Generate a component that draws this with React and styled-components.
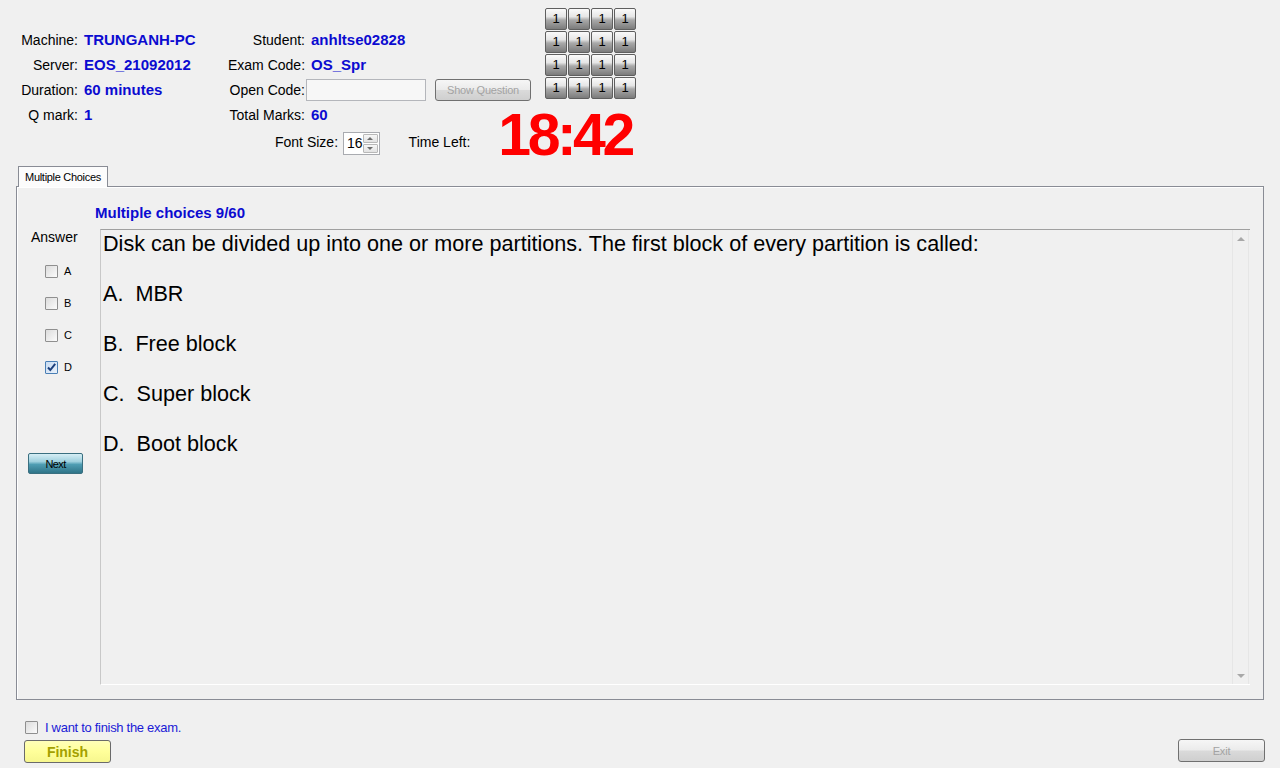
import React from "react";
import styled, { createGlobalStyle } from "styled-components";

const GlobalStyle = createGlobalStyle`
  html, body { margin: 0; padding: 0; background: #f0f0f0; }
  body { font-family: "Liberation Sans", Arial, sans-serif; color: #000; }
  #root { width: 1280px; height: 768px; overflow: hidden; }
`;

const Page = styled.div`
  width: 1280px;
  height: 768px;
  display: flex;
  flex-direction: column;
`;

const Header = styled.div`
  height: 166px;
  display: flex;
  align-items: flex-start;
`;

const InfoColumn = styled.div`
  width: 545px;
  flex-shrink: 0;
`;

const InfoGrid = styled.div`
  padding-top: 27px;
  display: grid;
  grid-template-columns: 78px 150px 77px 1fr;
  grid-auto-rows: 25px;
  align-items: center;
`;

const Label = styled.div`
  text-align: right;
  font-size: 14px;
  line-height: 16px;
  white-space: nowrap;
`;

const Value = styled.div`
  padding-left: 6px;
  font-size: 15px;
  font-weight: bold;
  color: #0b0bd0;
  line-height: 16px;
  white-space: nowrap;
`;

const OpenCodeRow = styled.div`
  display: flex;
  align-items: center;
`;

const TextInput = styled.div`
  box-sizing: border-box;
  margin-left: 1px;
  width: 120px;
  height: 22px;
  background: #f7f7f7;
  border: 1px solid #b4b6bb;
`;

const GrayButton = styled.button`
  box-sizing: border-box;
  width: ${(p) => p.w || 87}px;
  height: ${(p) => p.h || 23}px;
  margin: 0 0 0 ${(p) => p.ml || 0}px;
  padding: 0;
  border: 1px solid #707070;
  border-radius: 3px;
  background: linear-gradient(to bottom, #f6f6f6 0%, #ebebeb 48%, #dadada 52%, #cfcfcf 100%);
  font-family: "Liberation Sans", Arial, sans-serif;
  font-size: 11px;
  letter-spacing: -0.2px;
  color: #a3a3a3;
`;

const ButtonGrid = styled.div`
  margin-top: 8px;
  display: grid;
  grid-template-columns: repeat(4, 22px);
  grid-auto-rows: 22px;
  gap: 1px;
`;

const NumButton = styled.button`
  box-sizing: border-box;
  margin: 0;
  padding: 0;
  width: 22px;
  height: 22px;
  border: 1px solid #5f5f5f;
  border-radius: 2px;
  background: linear-gradient(to bottom, #fafafa 0%, #e6e6e6 38%, #a9a9a9 55%, #7b7b7b 100%);
  font-family: "Liberation Sans", Arial, sans-serif;
  font-size: 13px;
  line-height: 20px;
  color: #000;
`;

const BottomRow = styled.div`
  margin-top: -17px;
  height: 56px;
  padding-left: 275px;
  display: flex;
  align-items: flex-start;
  white-space: nowrap;
`;

const RowLabel = styled.div`
  margin-top: 24px;
  margin-left: ${(p) => p.ml || 0}px;
  font-size: 14px;
  line-height: 16px;
`;

const Spinner = styled.div`
  box-sizing: border-box;
  margin-left: 5px;
  margin-top: 22px;
  width: 42px;
  height: 23px;
  display: flex;
  background: #fff;
  border: 1px solid #a9abb0;
`;

const SpinValue = styled.div`
  flex: 1;
  padding-left: 3px;
  font-size: 14px;
  line-height: 21px;
`;

const SpinButtons = styled.div`
  width: 15px;
  display: flex;
  flex-direction: column;
  padding: 1px 1px 1px 0;
  gap: 1px;
`;

const SpinBtn = styled.div`
  flex: 1;
  display: flex;
  align-items: center;
  justify-content: center;
  border: 1px solid #b8b8b8;
  border-radius: 1px;
  background: linear-gradient(to bottom, #f7f7f7, #e2e2e2);
  &::after {
    content: "";
    border-left: 3px solid transparent;
    border-right: 3px solid transparent;
    ${(p) => (p.up ? "border-bottom: 3px solid #6d6d6d;" : "border-top: 3px solid #6d6d6d;")}
  }
`;

const Clock = styled.div`
  margin-left: 28px;
  font-size: 59px;
  font-weight: bold;
  line-height: 50px;
  letter-spacing: -3.5px;
  color: #ff0000;
`;

const TabStrip = styled.div`
  height: 20px;
  padding-left: 18px;
  display: flex;
  align-items: flex-end;
  position: relative;
  z-index: 1;
`;

const Tab = styled.div`
  box-sizing: border-box;
  width: 90px;
  height: 21px;
  margin-bottom: -1px;
  border: 1px solid #898c95;
  border-bottom: none;
  background: #fcfcfc;
  font-size: 11px;
  letter-spacing: -0.3px;
  line-height: 20px;
  text-align: center;
`;

const TabPanel = styled.div`
  box-sizing: border-box;
  margin-left: 16px;
  width: 1248px;
  height: 514px;
  border: 1px solid #898c95;
  box-shadow: inset 1px 1px 0 #fff;
  display: grid;
  grid-template-columns: 83px 1150px;
  grid-template-rows: 42px 456px;
`;

const Title = styled.div`
  grid-column: 2;
  align-self: end;
  margin: 0 0 7px -5px;
  font-size: 15px;
  font-weight: bold;
  line-height: 18px;
  color: #0b0bd0;
`;

const AnswerColumn = styled.div`
  grid-column: 1;
  display: flex;
  flex-direction: column;
  align-items: flex-start;
`;

const AnswerTitle = styled.div`
  margin: 0 0 10px 14px;
  font-size: 14px;
  line-height: 16px;
`;

const OptionRow = styled.div`
  height: 32px;
  margin-left: 28px;
  display: flex;
  align-items: center;
  gap: 6px;
  font-size: 11px;
`;

const Box = styled.span`
  box-sizing: border-box;
  width: 13px;
  height: 13px;
  display: inline-flex;
  align-items: center;
  justify-content: center;
  border: 1px solid ${(p) => (p.checked ? "#4a7fb5" : "#8f8f8f")};
  border-radius: 1px;
  background: ${(p) =>
    p.checked
      ? "linear-gradient(135deg, #c9dcf2, #e9f1fa)"
      : "linear-gradient(135deg, #dcdcdc, #fbfbfb)"};
`;

const NextButton = styled.button`
  box-sizing: border-box;
  margin: 70px 0 0 11px;
  padding: 0;
  width: 55px;
  height: 21px;
  border: 1px solid #3a6f80;
  border-radius: 2px;
  background: linear-gradient(to bottom, #d6eef5 0%, #9fd0de 40%, #4f9db3 55%, #2f7488 100%);
  font-family: "Liberation Sans", Arial, sans-serif;
  font-size: 11px;
  letter-spacing: -0.6px;
  color: #000;
`;

const QuestionBox = styled.div`
  box-sizing: border-box;
  grid-column: 2;
  border-top: 1px solid #a0a0a0;
  border-left: 1px solid #c8c8c8;
  border-bottom: 1px solid #fff;
  display: flex;
`;

const QuestionText = styled.div`
  flex: 1;
  padding: 1px 0 0 2px;
  font-size: 21.6px;
  line-height: 25px;
  white-space: pre;
`;

const Para = styled.div`
  margin-bottom: 25px;
`;

const ScrollBar = styled.div`
  width: 15px;
  margin-right: 1px;
  border-left: 1px solid #e6e6e6;
  border-right: 1px solid #e6e6e6;
  display: flex;
  flex-direction: column;
  justify-content: space-between;
  align-items: center;
  padding: 7px 0 6px;
  &::before, &::after {
    content: "";
    border-left: 4px solid transparent;
    border-right: 4px solid transparent;
  }
  &::before { border-bottom: 4px solid #a8a8a8; }
  &::after { border-top: 4px solid #a8a8a8; }
`;

const FinishCheck = styled.label`
  margin: 20px 0 0 25px;
  height: 14px;
  display: flex;
  align-items: center;
  gap: 7px;
  font-size: 13px;
  letter-spacing: -0.3px;
  color: #1a1ad6;
`;

const ActionRow = styled.div`
  margin-top: 6px;
  padding: 0 15px 0 24px;
  display: flex;
  justify-content: space-between;
  align-items: flex-start;
`;

const FinishButton = styled.button`
  box-sizing: border-box;
  width: 87px;
  height: 23px;
  margin: 0;
  padding: 0;
  border: 1px solid #6a6a6a;
  border-radius: 3px;
  background: linear-gradient(to bottom, #ffffb8 0%, #ffff9a 50%, #f7f78e 100%);
  font-family: "Liberation Sans", Arial, sans-serif;
  font-size: 14px;
  font-weight: bold;
  color: #a3a000;
`;

const ExitWrap = styled.div`
  margin-top: -1px;
`;

function CheckBox({ checked }) {
  return (
    <Box checked={checked}>
      {checked && (
        <svg width="11" height="11" viewBox="0 0 11 11">
          <path d="M2 5.5 L4.3 8 L9.2 1.8" fill="none" stroke="#1c3f7c" strokeWidth="2" />
        </svg>
      )}
    </Box>
  );
}

const options = [
  { key: "A", checked: false },
  { key: "B", checked: false },
  { key: "C", checked: false },
  { key: "D", checked: true },
];

const lines = [
  "Disk can be divided up into one or more partitions. The first block of every partition is called:",
  "A.  MBR",
  "B.  Free block",
  "C.  Super block",
  "D.  Boot block",
];

export default function App() {
  return (
    <Page>
      <GlobalStyle />
      <Header>
        <InfoColumn>
          <InfoGrid>
            <Label>Machine:</Label>
            <Value>TRUNGANH-PC</Value>
            <Label>Student:</Label>
            <Value>anhltse02828</Value>

            <Label>Server:</Label>
            <Value>EOS_21092012</Value>
            <Label>Exam Code:</Label>
            <Value>OS_Spr</Value>

            <Label>Duration:</Label>
            <Value>60 minutes</Value>
            <Label>Open Code:</Label>
            <OpenCodeRow>
              <TextInput />
              <GrayButton w={96} h={22} ml={9}>Show Question</GrayButton>
            </OpenCodeRow>

            <Label>Q mark:</Label>
            <Value>1</Value>
            <Label>Total Marks:</Label>
            <Value>60</Value>
          </InfoGrid>
          <BottomRow>
            <RowLabel>Font Size:</RowLabel>
            <Spinner>
              <SpinValue>16</SpinValue>
              <SpinButtons>
                <SpinBtn up />
                <SpinBtn />
              </SpinButtons>
            </Spinner>
            <RowLabel ml={29}>Time Left:</RowLabel>
            <Clock>18:42</Clock>
          </BottomRow>
        </InfoColumn>
        <ButtonGrid>
          {Array.from({ length: 16 }).map((_, i) => (
            <NumButton key={i}>1</NumButton>
          ))}
        </ButtonGrid>
      </Header>

      <TabStrip>
        <Tab>Multiple Choices</Tab>
      </TabStrip>
      <TabPanel>
        <Title>Multiple choices 9/60</Title>
        <AnswerColumn>
          <AnswerTitle>Answer</AnswerTitle>
          {options.map((o) => (
            <OptionRow key={o.key}>
              <CheckBox checked={o.checked} />
              <span>{o.key}</span>
            </OptionRow>
          ))}
          <NextButton>Next</NextButton>
        </AnswerColumn>
        <QuestionBox>
          <QuestionText>
            {lines.map((l) => (
              <Para key={l}>{l}</Para>
            ))}
          </QuestionText>
          <ScrollBar />
        </QuestionBox>
      </TabPanel>

      <FinishCheck>
        <CheckBox />
        <span>I want to finish the exam.</span>
      </FinishCheck>
      <ActionRow>
        <FinishButton>Finish</FinishButton>
        <ExitWrap>
          <GrayButton w={87} h={23}>Exit</GrayButton>
        </ExitWrap>
      </ActionRow>
    </Page>
  );
}
